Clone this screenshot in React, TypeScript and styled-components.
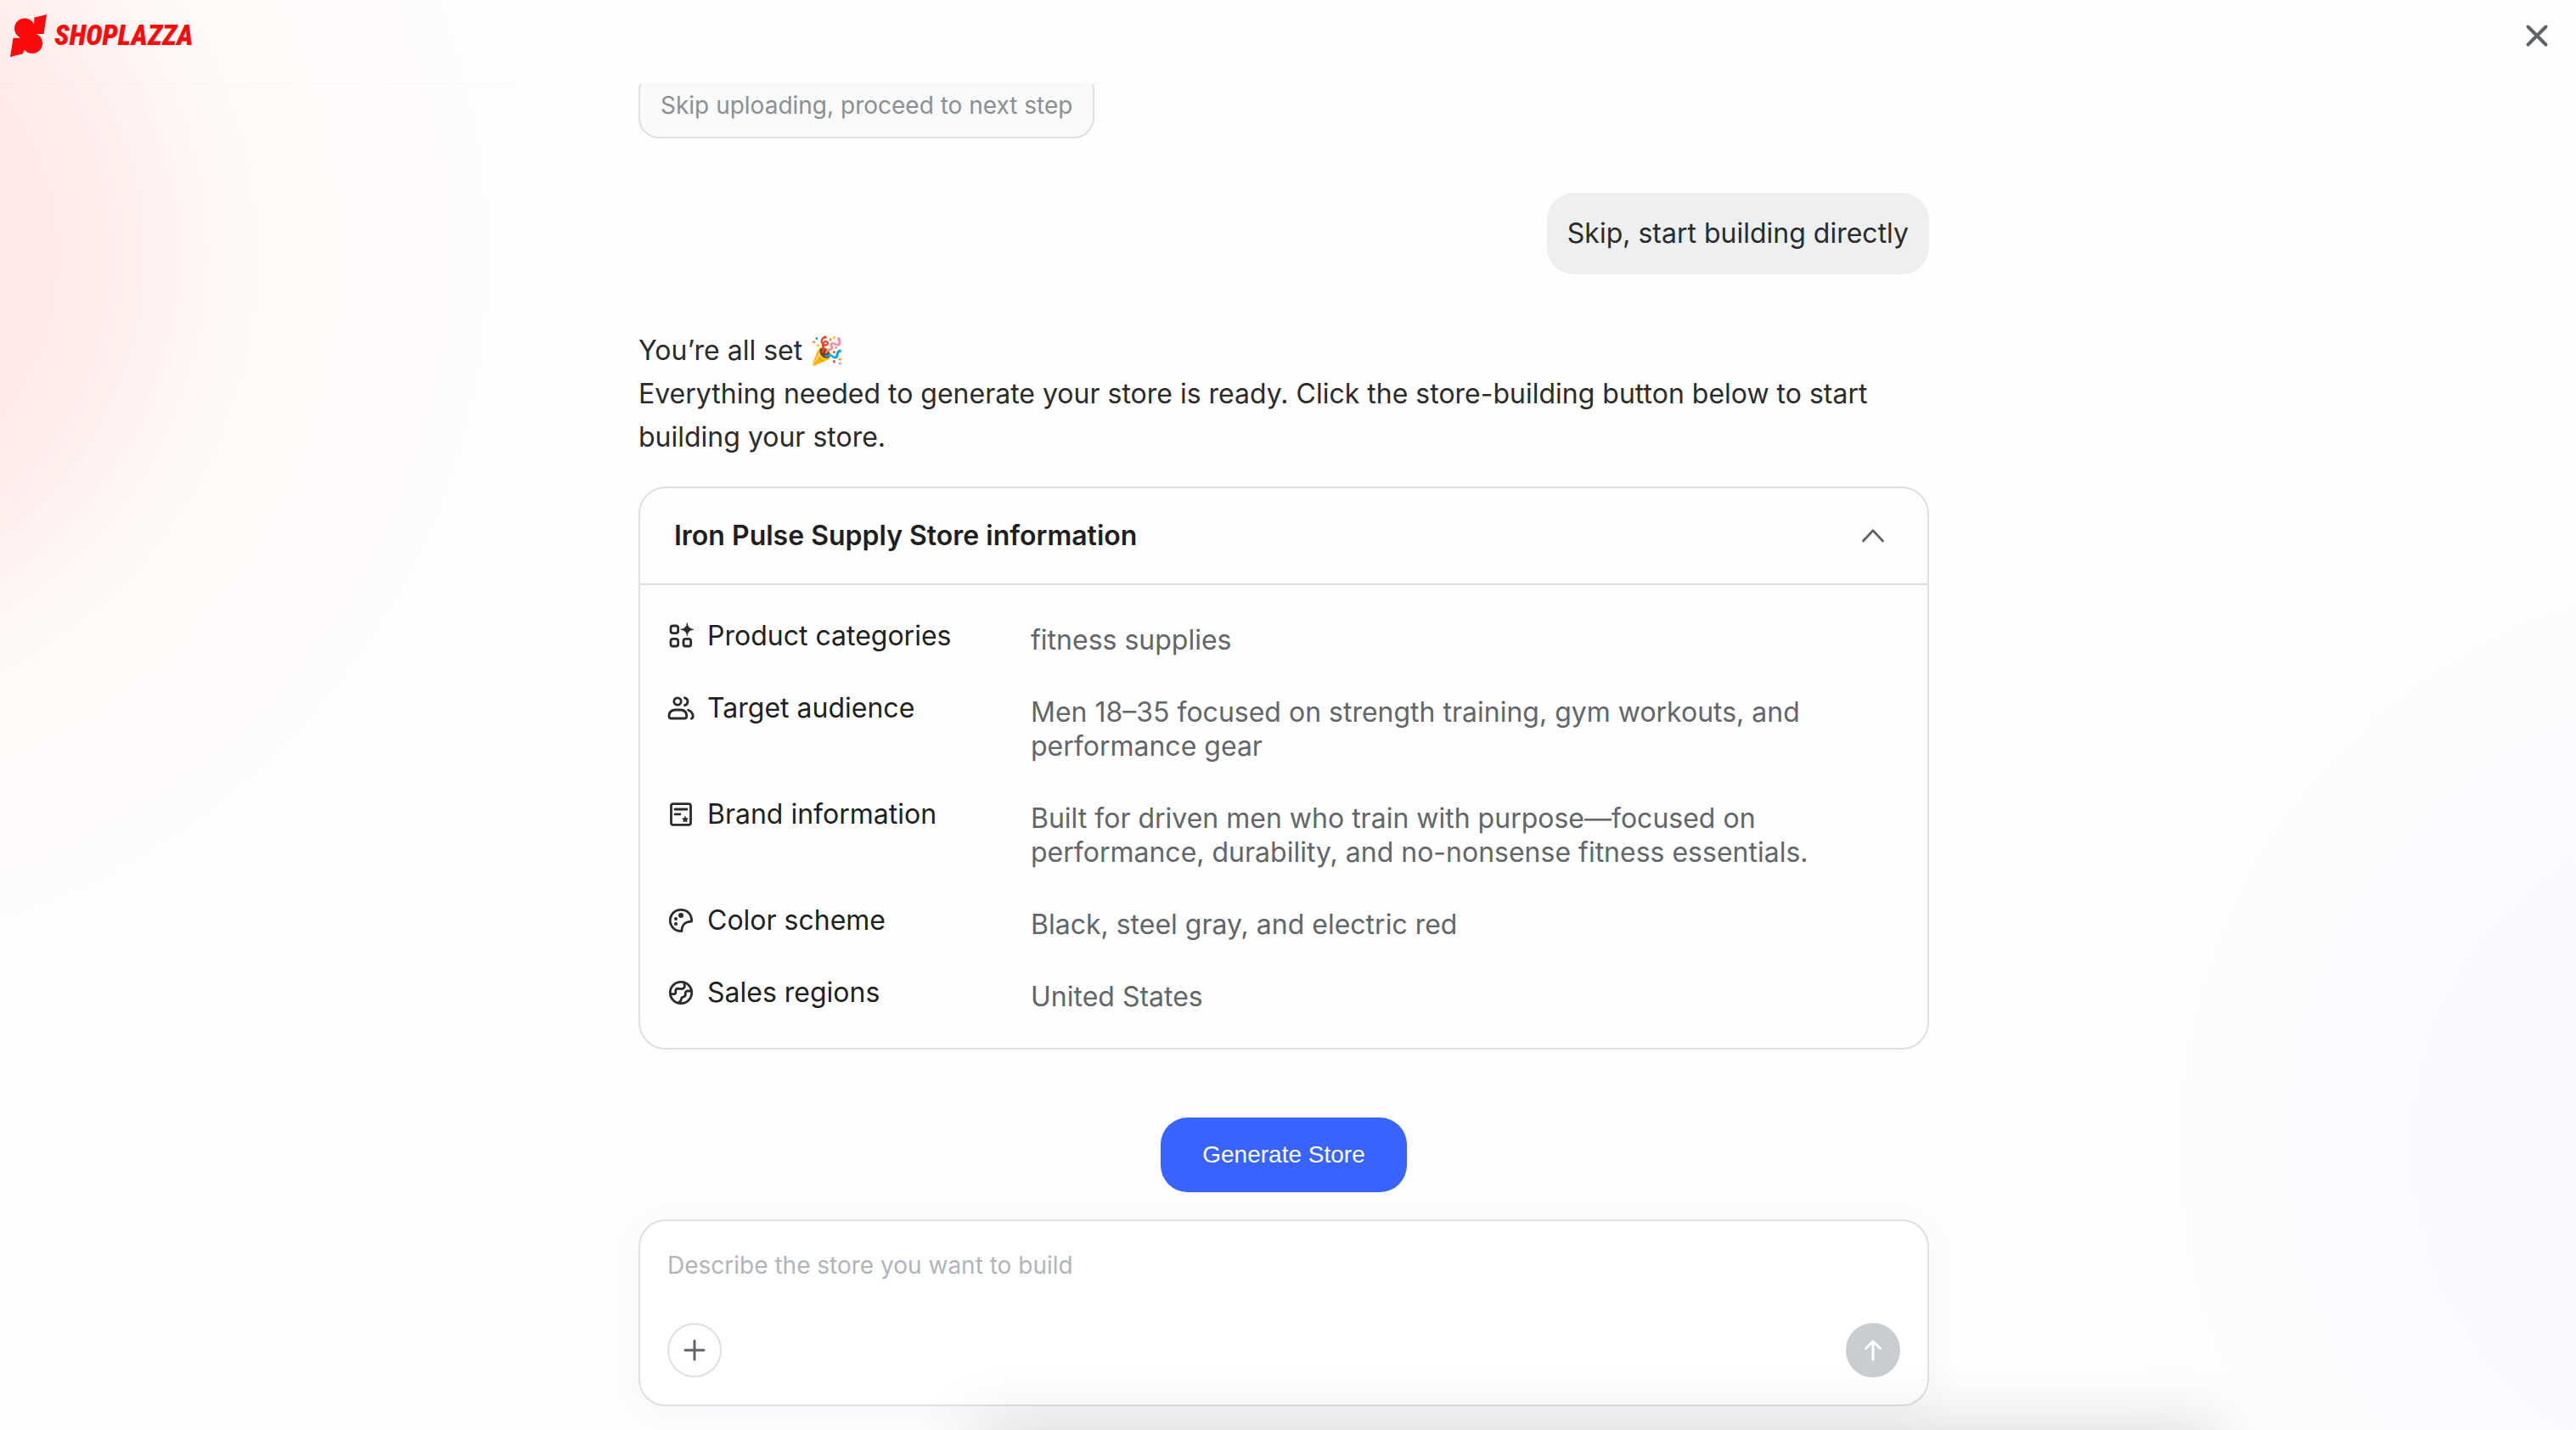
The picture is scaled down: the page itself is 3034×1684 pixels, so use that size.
import React from "react";
import styled, { createGlobalStyle } from "styled-components";

const sans = `Inter, "Noto Sans", "Liberation Sans", sans-serif`;
const line = "#e0e0e1";

const GlobalStyle = createGlobalStyle`
  *, *::before, *::after { box-sizing: border-box; }
  body { margin: 0; font-family: ${sans}; color: #2b2b2b; }
  button { font: inherit; cursor: pointer; }
`;

const Page = styled.div`
  position: relative;
  display: flex;
  flex-direction: column;
  height: 100vh;
  overflow: hidden;
  background:
    radial-gradient(circle 900px at -244px 300px, #ffe0e0 0%, #ffe9e9 30%, #ffeeed 42%, #fff9f6 57%, #fffbfa 72%, #fefcfb 86%, rgba(254, 254, 254, 0) 100%),
    radial-gradient(circle 780px at calc(100% + 204px) 1350px, #f6f6ff 0%, #f9f9ff 40%, #fbfbff 62%, #fdfdfe 86%, rgba(254, 254, 254, 0) 100%),
    #fefefe;
`;

/* Soft shadow rising from below the lower edge of the window */
const EdgeShadow = styled.div`
  position: absolute;
  top: 100%;
  left: 38%;
  right: 14%;
  height: 120px;
  box-shadow: 0 0 80px rgba(0, 0, 0, 0.16);
  pointer-events: none;
`;

const Header = styled.header`
  flex: none;
  display: flex;
  align-items: flex-start;
  justify-content: space-between;
  height: 99px;
  padding: 16px 32px 0 12px;
  border-bottom: 1px solid rgba(0, 0, 0, 0.02);
`;

const Brand = styled.a`
  display: flex;
  align-items: center;
  gap: 8px;
  height: 52px;
  color: #ff0a0a;
  text-decoration: none;
  font: italic 900 33px/40px "Roboto Condensed", "Liberation Sans Narrow", "Open Sans Condensed", Roboto, sans-serif;
`;

const CloseButton = styled.button`
  display: flex;
  padding: 12px 0;
  border: 0;
  background: none;
  color: #5f6368;
`;

const Chat = styled.main`
  flex: 1;
  min-height: 0;
  display: flex;
  flex-direction: column;
  justify-content: flex-end;
  align-items: center;
  overflow: hidden;
  padding: 0 10px 32px 0;
`;

const Column = styled.div`
  display: flex;
  flex-direction: column;
  width: 100%;
  max-width: 1520px;
`;

const SkipButton = styled.button`
  align-self: flex-start;
  padding: 19px 24px 17px;
  border: 2px solid ${line};
  border-radius: 24px;
  background: #f9fafa;
  color: #8b8f94;
  font-size: 28px;
  line-height: 40px;
`;

const UserBubble = styled.p`
  align-self: flex-end;
  margin: 64px 0;
  padding: 24px;
  border-radius: 32px;
  background: #eeeff1;
  font-size: 32px;
  line-height: 48px;
`;

const Reply = styled.p`
  margin: 0 0 33px;
  font-size: 32px;
  line-height: 51px;
`;

const InfoCard = styled.section`
  border: 2px solid ${line};
  border-radius: 32px;
`;

const InfoHeader = styled.button`
  display: flex;
  align-items: center;
  justify-content: space-between;
  width: 100%;
  height: 114px;
  padding: 0 48px 0 40px;
  border: 0;
  border-bottom: 2px solid ${line};
  background: none;
  color: #1f1f1f;
  text-align: left;
`;

const InfoTitle = styled.span`
  font-size: 32px;
  line-height: 48px;
  font-weight: 600;
`;

const InfoList = styled.dl`
  display: grid;
  row-gap: 40px;
  margin: 0;
  padding: 40px 32px;
`;

const InfoRow = styled.div`
  display: grid;
  grid-template-columns: 428px minmax(0, 940px);
`;

const InfoLabel = styled.dt`
  display: flex;
  align-items: center;
  gap: 15px;
  height: 40px;
  color: #1f1f1f;
  font-size: 32px;
  line-height: 40px;
`;

const InfoValue = styled.dd`
  margin: 0;
  padding-top: 5px;
  color: #626569;
  font-size: 32px;
  line-height: 40px;
`;

const GenerateButton = styled.button`
  align-self: center;
  margin-top: 80px;
  padding: 24px 49px;
  border: 0;
  border-radius: 32px;
  background: #3863ff;
  color: #fff;
  font: 28px/40px "Liberation Sans", Arial, sans-serif;
`;

const Footer = styled.footer`
  flex: none;
  display: flex;
  justify-content: center;
  padding: 0 10px 28px 0;
`;

const Composer = styled.form`
  display: flex;
  flex-direction: column;
  justify-content: space-between;
  width: 100%;
  max-width: 1520px;
  height: 220px;
  padding: 32px;
  border: 2px solid ${line};
  border-radius: 32px;
  background: #fff;
  box-shadow: 0 8px 48px rgba(60, 70, 150, 0.05);
`;

const Prompt = styled.input`
  width: 100%;
  height: 40px;
  padding: 0;
  border: 0;
  outline: 0;
  background: none;
  font: 28px/40px ${sans};
  &::placeholder { color: #b0b5ba; opacity: 1; }
`;

const Actions = styled.div`
  display: flex;
  justify-content: space-between;
`;

const RoundButton = styled.button<{ $filled?: boolean }>`
  display: grid;
  place-items: center;
  width: 64px;
  height: 64px;
  padding: 0;
  border: 2px solid ${(p) => (p.$filled ? "#cacdd0" : line)};
  border-radius: 50%;
  background: ${(p) => (p.$filled ? "#cacdd0" : "#fff")};
  color: ${(p) => (p.$filled ? "#fff" : "#5f6368")};
`;

const LogoMark = () => (
  <svg width="44" height="52" viewBox="0 0 44 52" fill="currentColor" aria-hidden="true">
    <circle cx="17" cy="17.5" r="12" />
    <circle cx="26" cy="35" r="12" />
    <path d="M28.5 4.5Q34.5 3.5 43 1L39.6 24H30L33 31L21 34.5L14.6 47.6Q8 48.5 0 51.3L3.5 28.7H12L9 24L28 12.5Z" />
  </svg>
);

const Icon = ({ children }: { children: React.ReactNode }) => (
  <svg width="32" height="32" viewBox="0 0 32 32" fill="none" stroke="#2b2b2b" strokeWidth="2.8" strokeLinecap="round" strokeLinejoin="round" aria-hidden="true">
    {children}
  </svg>
);

const CategoryIcon = () => (
  <Icon>
    <rect x="4" y="4" width="8.7" height="8.7" rx="2.6" />
    <rect x="4" y="19.3" width="8.7" height="8.7" rx="2.6" />
    <rect x="19" y="19.3" width="8.7" height="8.7" rx="2.6" />
    <path d="M23.3 1Q24 7.6 30.8 8.3Q24 9 23.3 15.6Q22.6 9 15.8 8.3Q22.6 7.6 23.3 1Z" fill="#2b2b2b" strokeWidth=".8" />
  </Icon>
);

const AudienceIcon = () => (
  <Icon>
    <circle cx="12" cy="8" r="4.2" />
    <path d="M20.4 3.8Q24 4.8 24 8.2Q24 11.6 20.4 12.7" />
    <path d="M9 18H16Q22.7 18.6 22.7 25.4Q22.7 28 20 28H4.8Q2 28 2 25.4Q2 18.6 9 18Z" />
    <path d="M24.6 18.2Q29.8 20 30.2 25.5Q30.2 27.6 28.4 28.2" />
  </Icon>
);

const BrandIcon = () => (
  <Icon>
    <rect x="4.5" y="3.6" width="23" height="24.8" rx="2.4" />
    <path d="M9 10H23M9 15.8H15" />
    <path d="M21 18.4L22.1 20.6L24.5 20.9L22.8 22.6L23.2 25L21 23.9L18.8 25L19.2 22.6L17.5 20.9L19.9 20.6Z" fill="#2b2b2b" strokeWidth=".6" />
  </Icon>
);

const PaletteIcon = () => (
  <Icon>
    <path d="M28.6 17.2C29 8.6 23.2 3.3 16 3.3C8.8 3.3 3.3 9 3.3 16C3.3 23 8.8 28.6 16.8 28.6C17.4 21.6 19.6 17.6 28.6 17.2Z" />
    <g fill="#2b2b2b" stroke="none">
      <circle cx="16" cy="10" r="3" />
      <circle cx="10" cy="14" r="2.1" />
      <circle cx="10" cy="20" r="2.1" />
    </g>
  </Icon>
);

const GlobeIcon = () => (
  <Icon>
    <circle cx="16" cy="16" r="12.7" />
    <path d="M3.8 17.6H8.4Q9.8 17.4 9.8 15.8V14Q9.8 11.2 12.6 11.2L16.6 11.6Q20.6 11.2 20.4 7.6L19.6 4" />
    <path d="M28.2 14H23.8Q21 14.2 21.2 17L21.4 18.2Q21.2 20.6 18.4 21.2Q16.6 21.6 16.4 23.4Q16 26.6 13.4 27.8" />
  </Icon>
);

const rows = [
  { icon: <CategoryIcon />, label: "Product categories", value: "fitness supplies" },
  { icon: <AudienceIcon />, label: "Target audience", value: "Men 18–35 focused on strength training, gym workouts, and performance gear" },
  { icon: <BrandIcon />, label: "Brand information", value: "Built for driven men who train with purpose—focused on performance, durability, and no-nonsense fitness essentials." },
  { icon: <PaletteIcon />, label: "Color scheme", value: "Black, steel gray, and electric red" },
  { icon: <GlobeIcon />, label: "Sales regions", value: "United States" },
];

export default function App() {
  return (
    <Page>
      <GlobalStyle />
      <Header>
        <Brand href="#">
          <LogoMark />
          <span>SHOPLAZZA</span>
        </Brand>
        <CloseButton type="button" aria-label="Close">
          <svg width="28" height="28" viewBox="0 0 28 28" fill="none" stroke="currentColor" strokeWidth="4" strokeLinecap="round">
            <path d="M3.5 3.5L24.5 24.5M24.5 3.5L3.5 24.5" />
          </svg>
        </CloseButton>
      </Header>
      <Chat>
        <Column>
          <SkipButton type="button">Skip uploading, proceed to next step</SkipButton>
          <UserBubble>Skip, start building directly</UserBubble>
          <Reply>
            You’re all set 🎉
            <br />
            Everything needed to generate your store is ready. Click the store-building button below to start building your store.
          </Reply>
          <InfoCard>
            <InfoHeader type="button" aria-expanded="true">
              <InfoTitle>Iron Pulse Supply Store information</InfoTitle>
              <svg width="32" height="32" viewBox="0 0 32 32" fill="none" stroke="#5f6368" strokeWidth="2.8" strokeLinecap="round" strokeLinejoin="round" aria-hidden="true">
                <path d="M4.5 22L16 9.8L27.5 22" />
              </svg>
            </InfoHeader>
            <InfoList>
              {rows.map((row) => (
                <InfoRow key={row.label}>
                  <InfoLabel>
                    {row.icon}
                    {row.label}
                  </InfoLabel>
                  <InfoValue>{row.value}</InfoValue>
                </InfoRow>
              ))}
            </InfoList>
          </InfoCard>
          <GenerateButton type="button">Generate Store</GenerateButton>
        </Column>
      </Chat>
      <Footer>
        <Composer onSubmit={(e) => e.preventDefault()}>
          <Prompt aria-label="Store description" placeholder="Describe the store you want to build" />
          <Actions>
            <RoundButton type="button" aria-label="Add attachment">
              <svg width="28" height="28" viewBox="0 0 28 28" fill="none" stroke="currentColor" strokeWidth="3" strokeLinecap="round">
                <path d="M14 3V25M3 14H25" />
              </svg>
            </RoundButton>
            <RoundButton type="submit" aria-label="Send" $filled>
              <svg width="28" height="28" viewBox="0 0 28 28" fill="none" stroke="currentColor" strokeWidth="3" strokeLinecap="round" strokeLinejoin="round">
                <path d="M14 25V3.5M5.5 12L14 3.5L22.5 12" />
              </svg>
            </RoundButton>
          </Actions>
        </Composer>
      </Footer>
      <EdgeShadow />
    </Page>
  );
}
